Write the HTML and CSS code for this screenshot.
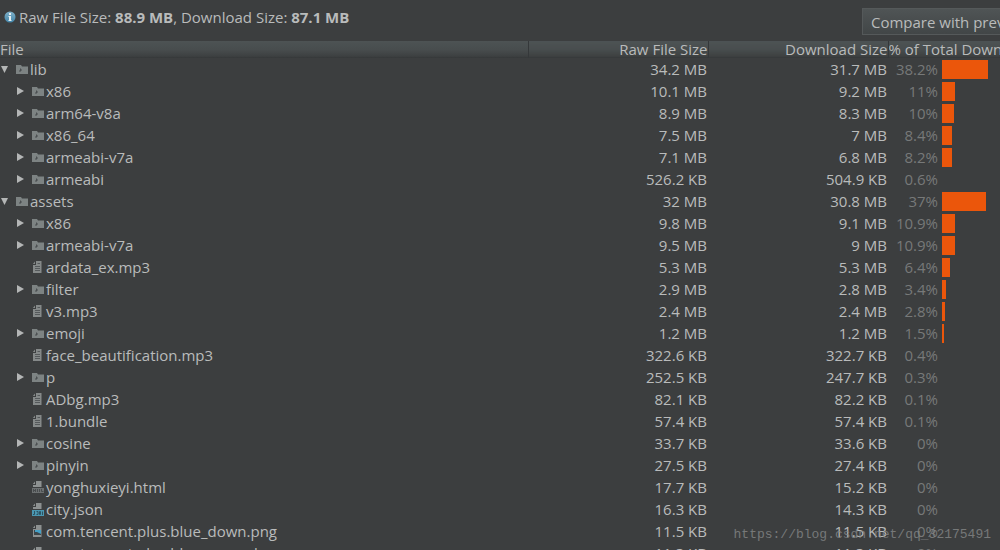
FILE: index.html
```html
<!DOCTYPE html>
<html lang="en">
<head>
<meta charset="utf-8">
<title>APK Analyzer</title>
<link rel="stylesheet" href="styles.css">
</head>
<body>
<svg class="defs" aria-hidden="true">
  <defs>
    <linearGradient id="infoFill" x1="0" y1="0" x2="0" y2="1"><stop offset="0" stop-color="#7fb0c8"/><stop offset="1" stop-color="#4285a9"/></linearGradient>
    <symbol id="folder" viewBox="0 0 12 13"><path fill="#7d8383" d="M0 2h5l1 1.500h6V11H0z"/><path fill="#4b4f51" d="M4 5.500h1v1h1v1H5v1H3v-1h1z"/></symbol>
    <symbol id="page" viewBox="0 0 12 13"><path fill="#858989" d="M4 0h5.500v12H1V4h3z"/><path fill="#858989" d="M3 .5V3H.8z"/><path stroke="#55595b" d="M3 5.500h5M3 7.500h5M3 9.500h5M5.500 2.500H8"/></symbol>
    <symbol id="html" viewBox="0 0 12 13"><path fill="#8d9191" d="M4 0h5.500v6H1V4h3z"/><path fill="#8d9191" d="M3 .5V3H.8z"/><path fill="#6c7071" d="M0 7h12v5H0z"/><path fill="none" stroke="#494c4e" d="M1.500 8v3M3.500 8v3M1.500 9.500h2M5.500 8v3M7.500 8v3M9.500 8v2.500h2"/></symbol>
    <symbol id="json" viewBox="0 0 12 13"><path fill="#8d9191" d="M4 0h5.500v6H1V4h3z"/><path fill="#8d9191" d="M3 .5V3H.8z"/><path fill="#4b97b1" d="M0 7h12v6H0z"/><path fill="none" stroke="#2d5362" d="M2.500 8v3.500H1M4.500 8.500h1.500v3H4.500M7.500 8.500h1v3h-1zM10.500 12V8.500"/></symbol>
    <symbol id="image" viewBox="0 0 12 13"><path fill="#8d9191" d="M4 0h5.500v12H1V4h3z"/><path fill="#8d9191" d="M3 .5V3H.8z"/><path fill="#3c464b" d="M2 5h7v5H2z"/><path fill="#45a0c6" d="M3 5h6v4L7 8 5 7H3z"/></symbol>
  </defs>
</svg>
<main class="analyzer">
  <header class="summary">
    <p class="sizes"><svg class="info" viewBox="0 0 12 12" aria-hidden="true"><circle cx="6" cy="6" r="5.500" fill="url(#infoFill)"/><path fill="#e4eef2" d="M5 2h2v2H5zM4.500 5H7v4h.5v1h-3V9H5V6h-.5z"/></svg><span>Raw File Size: <b>88.9 MB</b>, Download Size: <b>87.1 MB</b></span></p>
    <button class="compare" type="button">Compare with previous APK...</button>
  </header>
  <table class="files">
    <thead><tr><th class="name" scope="col">File</th><th class="size" scope="col">Raw File Size</th><th class="size" scope="col">Download Size</th><th class="share" scope="col">% of Total Download Size</th></tr></thead>
    <tbody id="rows"></tbody>
  </table>
  <p class="watermark">https://blog.csdn.net/qq_32175491</p>
</main>
<script src="rows.js"></script>
</body>
</html>
```
FILE: styles.css
```css
* { box-sizing: border-box; }

body {
  margin: 0;
  background: #3c3e3f;
  color: #b9bbbb;
  font: 15px/22px "Open Sans", "Noto Sans", sans-serif;
}

p { margin: 0; }

.defs { position: absolute; width: 0; height: 0; }

.analyzer {
  position: relative;
  height: 100vh;
  overflow: hidden;
}

.summary {
  display: flex;
  justify-content: space-between;
  align-items: flex-start;
  height: 41px;
  padding-top: 6px;
}

.sizes {
  display: flex;
  align-items: center;
  gap: 3px;
  padding-left: 4px;
  white-space: nowrap;
}

.info { width: 12px; height: 12px; }

.compare {
  flex: none;
  width: 138px;
  height: 27px;
  margin-top: 2px;
  padding: 0 0 0 8px;
  overflow: hidden;
  border: 1px solid #55595a;
  border-right: 0;
  background: linear-gradient(#4f5455, #424647);
  color: inherit;
  font: inherit;
  text-align: left;
  white-space: nowrap;
}

.files {
  width: 100%;
  table-layout: fixed;
  border-collapse: collapse;
}

th, td {
  height: 22px;
  padding: 0;
  text-align: left;
  font-weight: normal;
  white-space: nowrap;
  overflow: hidden;
}

th {
  height: 17px;
  line-height: 17px;
  background: linear-gradient(#4d5354, #484d4e 50%, #3d4041 90%, #343738);
}

th + th { border-left: 1px solid #35383a; }

th.size { width: 180px; text-align: right; }

th.share { width: 112px; }

td.size { padding-right: 1px; text-align: right; }

.entry {
  display: flex;
  align-items: center;
  height: 22px;
}

.child { padding-left: 16px; }

.arrow {
  flex: none;
  width: 9px;
  height: 8px;
  margin-right: 7px;
  fill: #b4b6b6;
}

.icon {
  flex: none;
  width: 12px;
  height: 13px;
  margin-right: 2px;
}

.meter {
  display: flex;
  align-items: center;
  gap: 4px;
  height: 22px;
}

.percent {
  flex: none;
  width: 50px;
  color: #777979;
  text-align: right;
}

.track { flex: none; width: 120px; }

.bar {
  height: 19px;
  background: #eb560b;
}

.watermark {
  position: absolute;
  right: 9px;
  bottom: 4px;
  color: #858787;
  opacity: 0.8;
  font: 13px/22px "Liberation Mono", monospace;
}
```
FILE: rows.js
```js
const files = [
  ["open", "folder", "lib", "34.2 MB", "31.7 MB", 38.2],
  ["shut", "folder", "x86", "10.1 MB", "9.2 MB", 11],
  ["shut", "folder", "arm64-v8a", "8.9 MB", "8.3 MB", 10],
  ["shut", "folder", "x86_64", "7.5 MB", "7 MB", 8.4],
  ["shut", "folder", "armeabi-v7a", "7.1 MB", "6.8 MB", 8.2],
  ["shut", "folder", "armeabi", "526.2 KB", "504.9 KB", 0.6],
  ["open", "folder", "assets", "32 MB", "30.8 MB", 37],
  ["shut", "folder", "x86", "9.8 MB", "9.1 MB", 10.9],
  ["shut", "folder", "armeabi-v7a", "9.5 MB", "9 MB", 10.9],
  ["leaf", "page", "ardata_ex.mp3", "5.3 MB", "5.3 MB", 6.4],
  ["shut", "folder", "filter", "2.9 MB", "2.8 MB", 3.4],
  ["leaf", "page", "v3.mp3", "2.4 MB", "2.4 MB", 2.8],
  ["shut", "folder", "emoji", "1.2 MB", "1.2 MB", 1.5],
  ["leaf", "page", "face_beautification.mp3", "322.6 KB", "322.7 KB", 0.4],
  ["shut", "folder", "p", "252.5 KB", "247.7 KB", 0.3],
  ["leaf", "page", "ADbg.mp3", "82.1 KB", "82.2 KB", 0.1],
  ["leaf", "page", "1.bundle", "57.4 KB", "57.4 KB", 0.1],
  ["shut", "folder", "cosine", "33.7 KB", "33.6 KB", 0],
  ["shut", "folder", "pinyin", "27.5 KB", "27.4 KB", 0],
  ["leaf", "html", "yonghuxieyi.html", "17.7 KB", "15.2 KB", 0],
  ["leaf", "json", "city.json", "16.3 KB", "14.3 KB", 0],
  ["leaf", "image", "com.tencent.plus.blue_down.png", "11.5 KB", "11.5 KB", 0],
  ["leaf", "image", "com.tencent.plus.blue_normal.png", "11.3 KB", "11.3 KB", 0]
];
const arrows = { open: "M1 1h7L4.5 8z", shut: "M1 0v8l7-4z", leaf: "" };

document.getElementById("rows").innerHTML = files.map(([state, icon, name, raw, download, share]) => `
  <tr>
    <td><div class="entry ${state === "open" ? "" : "child"}"><svg class="arrow" viewBox="0 0 9 8"><path d="${arrows[state]}"/></svg><svg class="icon"><use href="#${icon}"/></svg><span>${name}</span></div></td>
    <td class="size">${raw}</td>
    <td class="size">${download}</td>
    <td><div class="meter"><span class="percent">${share}%</span><div class="track">${share >= 1 ? `<div class="bar" style="width:${share}%"></div>` : ""}</div></div></td>
  </tr>`).join("");
```
